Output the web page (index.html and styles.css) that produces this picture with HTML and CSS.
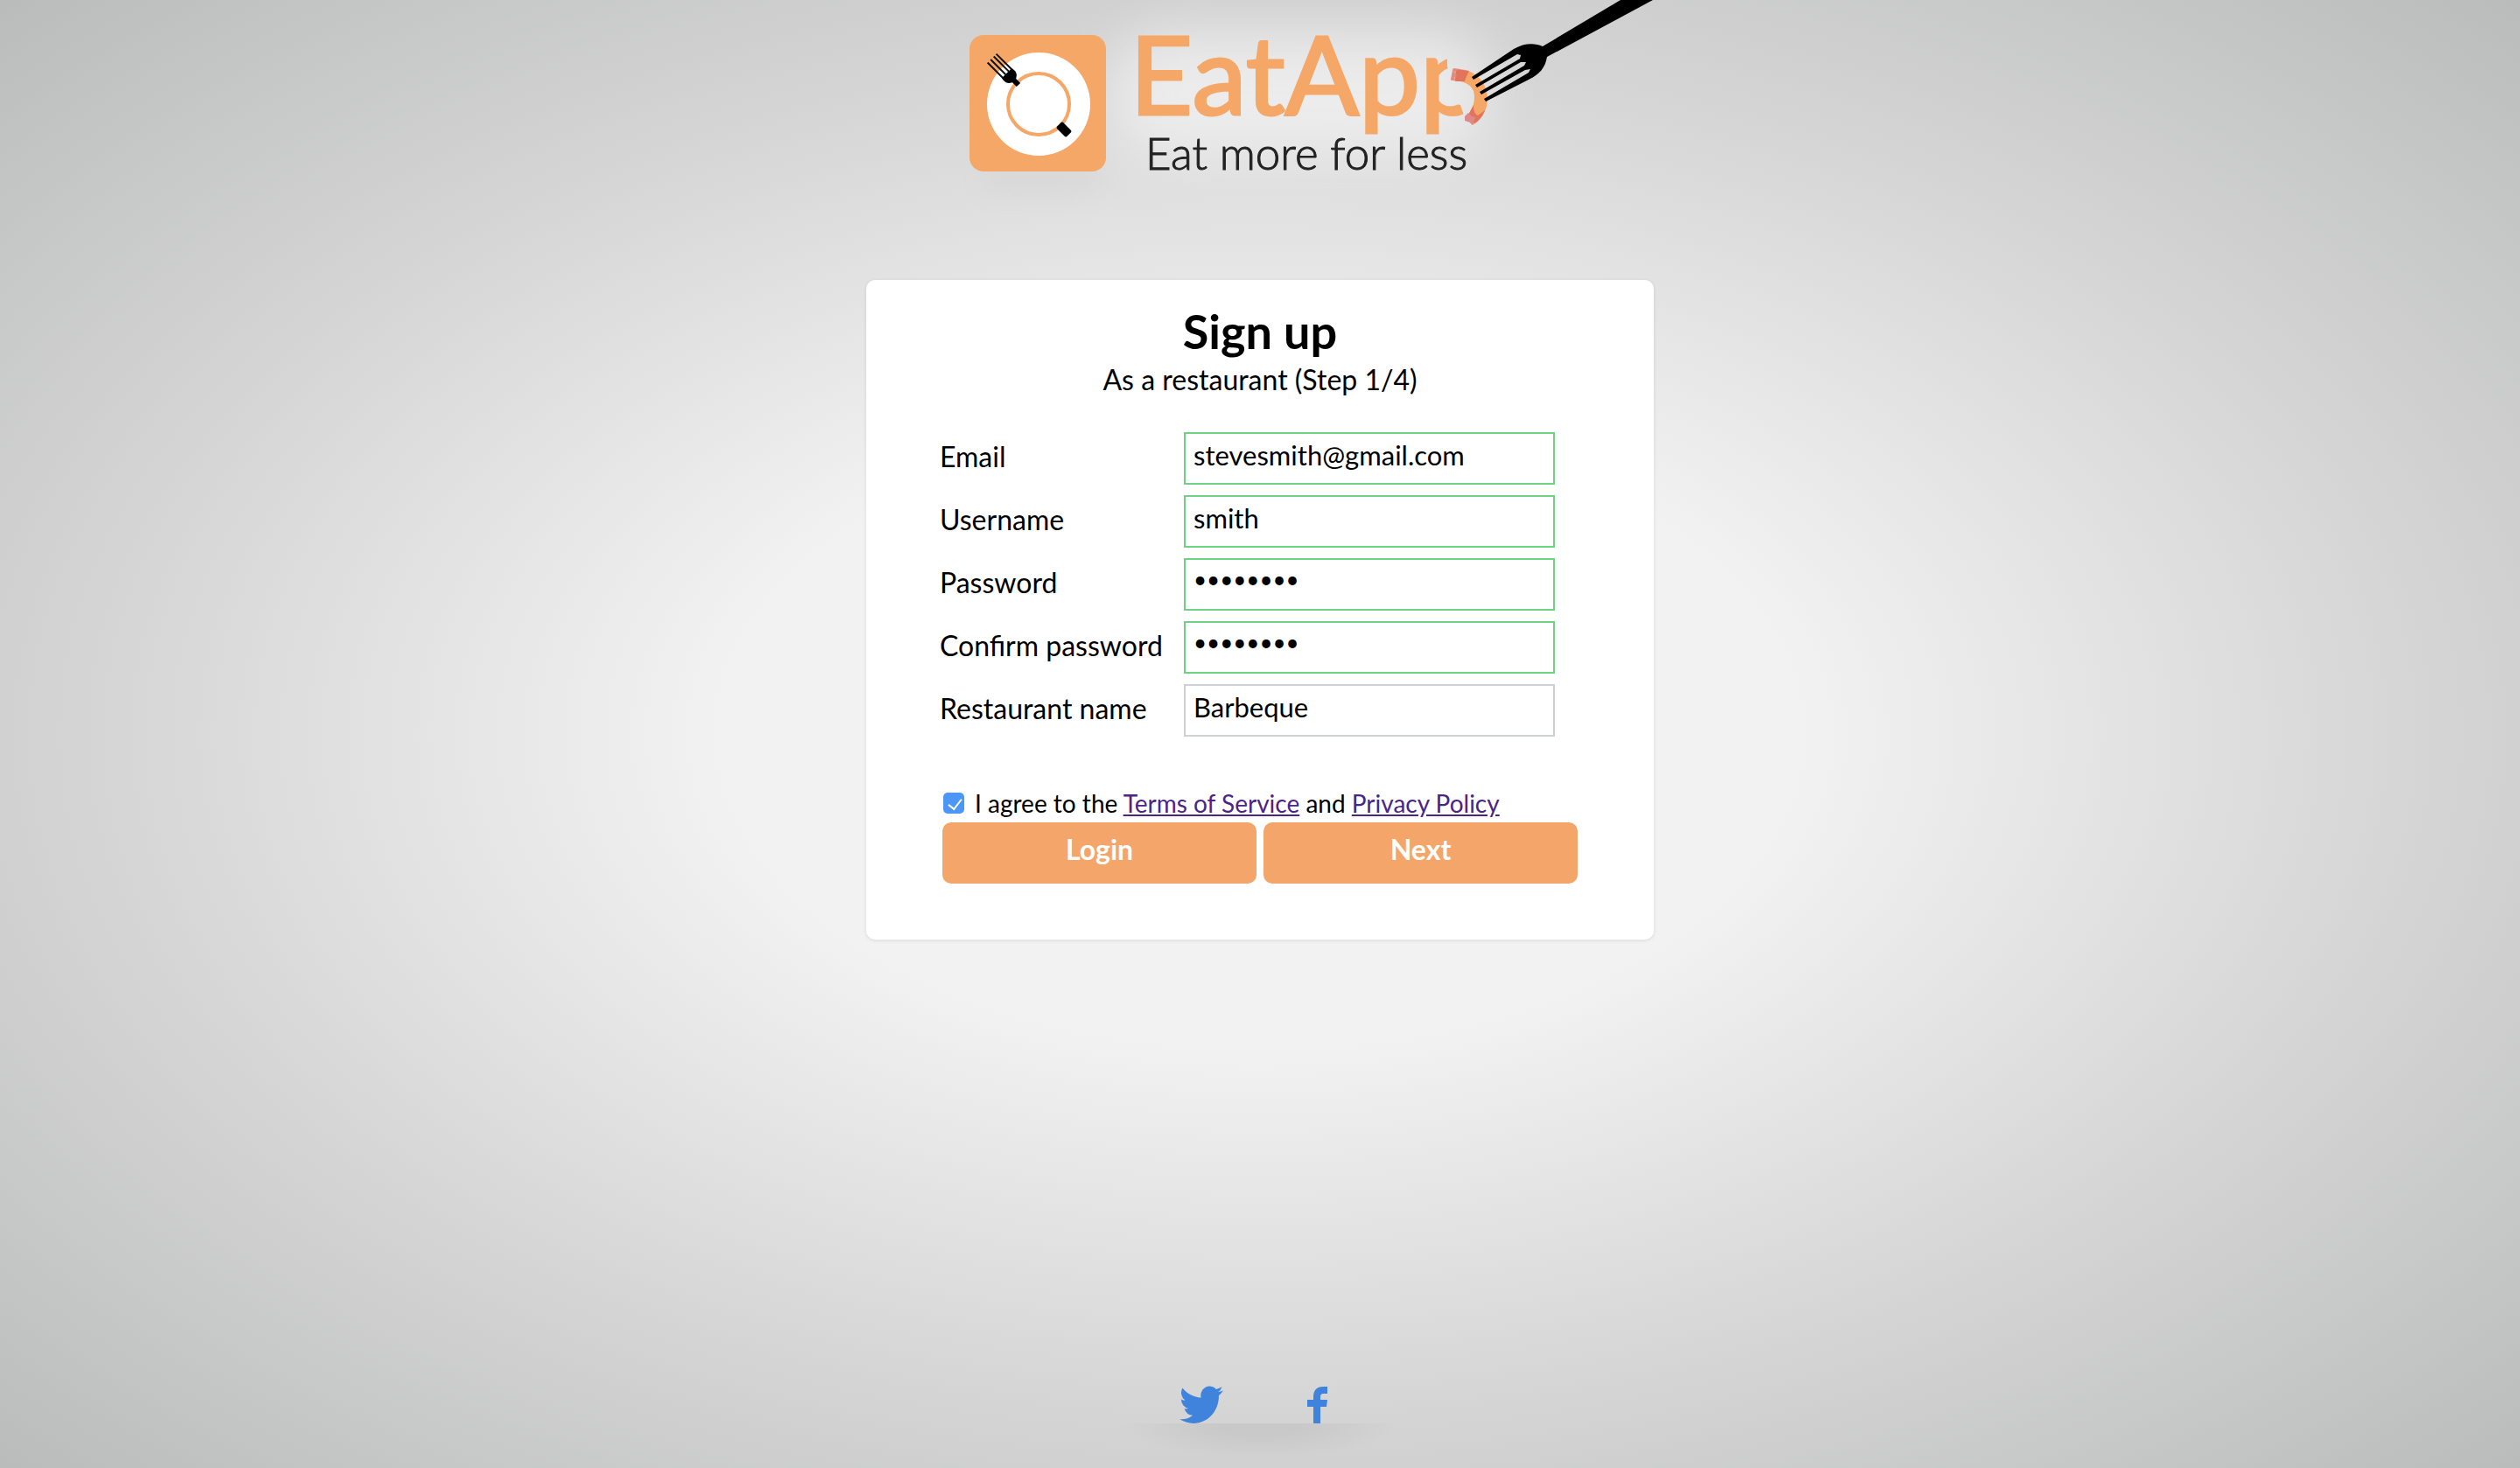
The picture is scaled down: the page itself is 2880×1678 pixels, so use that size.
FILE: index.html
```html
<!DOCTYPE html>
<html lang="en">
<head>
<meta charset="utf-8">
<title>EatApp - Sign up</title>
<meta name="viewport" content="width=device-width, initial-scale=1">
<link rel="stylesheet" href="styles.css">
</head>
<body>
<header class="header">
  <svg class="logo" viewBox="0 0 900 280" role="img" aria-label="EatApp, Eat more for less">
    <defs>
      <filter id="glow" x="-50%" y="-100%" width="200%" height="300%"><feGaussianBlur stdDeviation="30"/></filter>
      <filter id="soft" x="-50%" y="-200%" width="200%" height="500%"><feGaussianBlur stdDeviation="14"/></filter>
      <clipPath id="bite"><path d="M0 0H664V76L667 86L662 92V116L679 120L683 132L684 170H0Z"/></clipPath>
    </defs>
    <rect x="280" y="36" width="430" height="140" rx="60" fill="#fff" opacity=".5" filter="url(#glow)"/>
    <rect x="135" y="196" width="130" height="22" rx="10" fill="#bbb" opacity=".2" filter="url(#soft)"/>
    <rect x="118" y="40" width="156" height="156" rx="16" fill="#f5a767"/>
    <circle cx="197" cy="119" r="59" fill="#fff"/>
    <circle cx="197" cy="119" r="35" fill="none" stroke="#f5a767" stroke-width="4"/>
    <g transform="translate(174 97) rotate(-45)">
      <path d="M-3 0V-7C-9 -10 -9 -14 -8 -19H8C9 -14 9 -10 3 -7V0Z"/>
      <path d="M-7 -18V-43M-2 -18V-43M3 -18V-43M7 -18V-43" stroke="#111" stroke-width="2"/>
    </g>
    <rect x="-8" y="-5" width="16" height="10" rx="2" transform="translate(226 148) rotate(45)"/>
    <text class="logo-name" x="301" y="131" clip-path="url(#bite)">EatApp</text>
    <path fill="#f5a767" d="M670 79C692 76 710 92 710 112C710 128 702 138 693 143L684 134C692 128 695 120 695 110C695 99 686 92 668 92Z"/>
    <path fill="#e2745d" d="M674 79L689 81C687 85 685 89 684 93L673 93ZM694 120C694 126 695 130 699 132L707 126C704 134 699 139 695 141L687 133Z"/>
    <path fill="#dc8a8a" d="M671 78L679 79L671 82L675 86L671 89L675 93L668 91ZM688 129L692 133L696 134L693 143L690 140L684 138V133Z"/>
    <path d="M862 0H899L778 65C776 78 769 85 757 91L708 116L706 113L757 83L759 79L753 80L703 108L701 105L752 75L754 71L748 71L698 100L696 97L747 67L748 63L744 62L694 91L692 88L740 56C752 49 764 49 773 53Z"/>
    <text class="logo-tag" x="319" y="194">Eat more for less</text>
  </svg>
</header>

<main class="card">
  <h1 class="title">Sign up</h1>
  <p class="subtitle">As a restaurant (Step 1/4)</p>
  <form class="form">
    <div class="fields">
      <label for="email">Email</label>
      <input class="input valid" id="email" type="email" value="stevesmith@gmail.com">
      <label for="username">Username</label>
      <input class="input valid" id="username" type="text" value="smith">
      <label for="password">Password</label>
      <input class="input valid secret" id="password" type="password" value="barbeque">
      <label for="confirm">Confirm password</label>
      <input class="input valid secret" id="confirm" type="password" value="barbeque">
      <label for="restaurant">Restaurant name</label>
      <input class="input" id="restaurant" type="text" value="Barbeque">
    </div>
    <div class="terms">
      <input class="check" id="agree" type="checkbox" checked>
      <label for="agree">I agree to the <a href="#terms">Terms of Service</a> and <a href="#privacy">Privacy Policy</a></label>
    </div>
    <div class="actions">
      <button class="btn" type="button">Login</button>
      <button class="btn" type="submit">Next</button>
    </div>
  </form>
</main>

<footer class="footer">
  <a class="social" href="#twitter" aria-label="Twitter">
    <svg width="50" height="43" viewBox="0 2 24 19.8" preserveAspectRatio="none"><path d="M23.95 4.57a10 10 0 0 1-2.82.77 4.96 4.96 0 0 0 2.16-2.72c-.95.55-2 .95-3.13 1.18a4.92 4.92 0 0 0-8.38 4.48C7.69 8.09 4.07 6.13 1.64 3.16a4.92 4.92 0 0 0 1.52 6.57 4.9 4.9 0 0 1-2.23-.61v.06a4.92 4.92 0 0 0 3.95 4.83 5 5 0 0 1-2.21.08 4.94 4.94 0 0 0 4.6 3.42A9.87 9.87 0 0 1 0 19.54a14 14 0 0 0 7.55 2.21c9.05 0 14-7.5 14-13.98 0-.21 0-.42-.02-.63a9.94 9.94 0 0 0 2.46-2.55z"/></svg>
  </a>
  <a class="social" href="#facebook" aria-label="Facebook">
    <svg width="24" height="42" viewBox="0 0 24 42"><path d="M7 42V23H0V15H7V12C7 4 11 0 18 0H23V8H19C16 8 15 9 15 12V15H23L22 23H15V42Z"/></svg>
  </a>
</footer>
</body>
</html>
```
FILE: styles.css
```css
* {
  box-sizing: border-box;
}

body {
  margin: 0;
  min-height: 100vh;
  display: flex;
  flex-direction: column;
  align-items: center;
  font-family: Lato, "Open Sans", sans-serif;
  font-size: 32px;
  line-height: 40px;
  color: #000;
  background: radial-gradient(ellipse at center, #f2f2f2 30%, #d6d6d6 64%, #babbbb 100%);
}

.header {
  width: 100%;
  max-width: 900px;
  height: 320px;
}

.logo {
  display: block;
  width: 100%;
  overflow: visible;
}

.logo-name {
  font-size: 125px;
  font-weight: 400;
  fill: #f5a767;
  stroke: #f5a767;
  stroke-width: 3px;
}

.logo-tag {
  font-size: 51px;
  font-weight: 300;
  fill: #222;
  stroke: #222;
  stroke-width: 1px;
}

.card {
  width: 100%;
  max-width: 900px;
  padding: 24px 84px 64px;
  background: #fff;
  border-radius: 10px;
  box-shadow: 0 1px 4px rgba(0, 0, 0, .1);
}

.title {
  margin: 0;
  font-size: 54px;
  line-height: 70px;
  text-align: center;
}

.subtitle {
  margin: 0 0 40px;
  text-align: center;
}

.fields {
  display: grid;
  grid-template-columns: 279px 424px;
  row-gap: 12px;
  align-items: center;
}

.fields label {
  padding-bottom: 4px;
}

.input {
  width: 100%;
  height: 60px;
  padding: 0 9px 8px;
  border: 2px solid #cdd1d5;
  border-radius: 0;
  background: #fff;
  color: #000;
  font: inherit;
  font-size: 31px;
}

.valid {
  border-color: #6dd581;
}

.secret {
  padding-bottom: 12px;
  font-size: 26px;
}

.terms {
  display: flex;
  align-items: center;
  gap: 12px;
  margin-top: 56px;
  padding: 0 0 2px 4px;
  font-size: 28px;
}

.terms a {
  color: #4a2587;
}

.check {
  appearance: none;
  width: 24px;
  height: 24px;
  margin: 0;
  border-radius: 5px;
  background: #4c97f5;
  position: relative;
}

.check:checked::after {
  content: "";
  position: absolute;
  left: 9px;
  top: 4px;
  width: 7px;
  height: 13px;
  border: solid #fff;
  border-width: 0 2px 2px 0;
  transform: rotate(38deg);
}

.actions {
  display: grid;
  grid-template-columns: 1fr 1fr;
  gap: 8px;
  padding: 0 3px;
}

.btn {
  height: 70px;
  padding: 0 0 8px;
  border: 0;
  border-radius: 10px;
  background: #f4a56a;
  color: #fff;
  font: inherit;
  font-weight: 700;
}

.footer {
  position: relative;
  display: flex;
  align-items: flex-end;
  justify-content: center;
  gap: 96px;
  width: 320px;
  margin-top: auto;
  padding: 0 14px 51px 0;
}

.footer::after {
  content: "";
  position: absolute;
  left: 0;
  right: 0;
  bottom: 11px;
  height: 40px;
  background: radial-gradient(ellipse 50% 100% at 50% 0, rgba(100, 100, 100, .1) 30%, rgba(100, 100, 100, 0));
}

.social svg {
  display: block;
  fill: #4083dc;
}
```
